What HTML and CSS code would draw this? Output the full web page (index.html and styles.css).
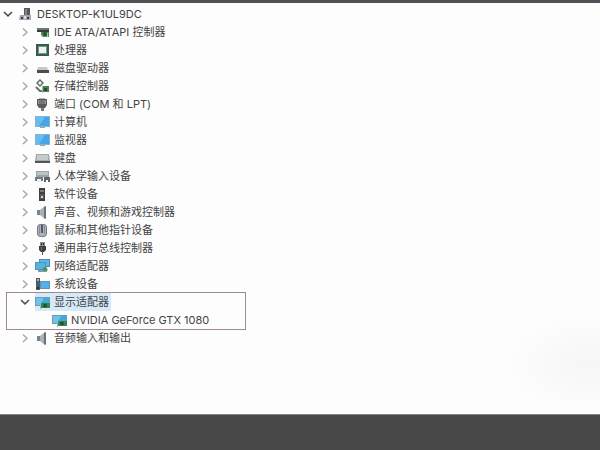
FILE: index.html
```
<!DOCTYPE html>
<html lang="zh-CN">
<head>
<meta charset="UTF-8" />
<title>设备管理器</title>
<link rel="stylesheet" href="styles.css">
</head>
<body>

<!-- shared glyphs -->
<svg class="defs" width="0" height="0" aria-hidden="true">
  <symbol id="right" viewBox="0 0 14 14"><path d="M5 3.5l4 3.7-4 3.7" fill="none" stroke="#a3a3a3" stroke-width="1.3"/></symbol>
  <symbol id="down" viewBox="0 0 14 14"><path d="M3 5l4 3.8L11 5" fill="none" stroke="#505050" stroke-width="1.6"/></symbol>
  <symbol id="monitor" viewBox="0 0 16 16">
    <path d="M0 2h15v11H0z" fill="#86b4cf"/><path d="M1 3h13v9H1z" fill="#44a6e4"/><path d="M1 3h9l-6 9H1z" fill="#69bcef"/>
    <path d="M5 13h5v1H5z" fill="#8fa9b8"/>
  </symbol>
  <symbol id="adapter" viewBox="0 0 16 16">
    <path d="M0 3h15v9H0z" fill="#6c9db8"/><path d="M1 4h13v7H1z" fill="#3faadd"/><path d="M1 4h8l-4 7H1z" fill="#6ec3ea"/>
    <path d="M6 9h9v5H6z" fill="#3c8454"/><path d="M5 9h1v6H5z" fill="#a0b8ac"/><circle cx="10" cy="11.5" r="2" fill="#1f5537"/>
  </symbol>
  <symbol id="speaker" viewBox="0 0 16 16">
    <path d="M2 6h3v5H2z" fill="#78848c"/><path d="M5 6l5-4v13l-5-4z" fill="#a9b2b8"/><path d="M9 3l2-1v13l-2-1z" fill="#687278"/>
  </symbol>
</svg>

<div class="window">
  <main class="panel">
    <ul class="tree">
      <li>
        <div class="row">
          <button class="toggle" aria-label="折叠"><svg><use href="#down"/></svg></button>
          <svg class="icon" viewBox="0 0 16 16"><path d="M6 2h6v8H6z" fill="#59545d"/><path d="M7 3h2v6H7z" fill="#85818b"/><path d="M2 9h11v5H1z" fill="#a2a6b1"/><path d="M3 11h2v2H3zM9 11h2v2H9z" fill="#353c44"/><path d="M6 10h2v3H6z" fill="#d9dce3"/></svg>
          <span class="label">DESKTOP-K1UL9DC</span>
        </div>
        <ul class="branch">
          <li class="row">
            <button class="toggle" aria-label="展开"><svg><use href="#right"/></svg></button>
            <svg class="icon" viewBox="0 0 16 16"><path d="M2 4h12v4H2z" fill="#6c7773"/><path d="M2 6h12v2H2z" fill="#343f39"/><path d="M6 8h8v5H8L6 11z" fill="#4e8d5d"/><circle cx="10" cy="10" r="2" fill="#24512e"/><path d="M12 9h1v4h-1z" fill="#a8c7a6"/></svg>
            <span class="label">IDE ATA/ATAPI 控制器</span>
          </li>
          <li class="row">
            <button class="toggle" aria-label="展开"><svg><use href="#right"/></svg></button>
            <svg class="icon" viewBox="0 0 16 16"><path d="M1 2h13v12H1z" fill="#365d4c"/><path d="M3 4h9v8H3z" fill="#719784"/><path d="M4 5h7v6H4z" fill="#eef2ef"/></svg>
            <span class="label">处理器</span>
          </li>
          <li class="row">
            <button class="toggle" aria-label="展开"><svg><use href="#right"/></svg></button>
            <svg class="icon" viewBox="0 0 16 16"><path d="M3 7h9l1 3H2z" fill="#c8c8c8"/><path d="M2 10h12v3H2z" fill="#4d4d4d"/></svg>
            <span class="label">磁盘驱动器</span>
          </li>
          <li class="row">
            <button class="toggle" aria-label="展开"><svg><use href="#right"/></svg></button>
            <svg class="icon" viewBox="0 0 16 16"><path d="M5 2l3 3-3 3-3-3z" fill="#f4f4f4" stroke="#5c6c69" stroke-width="1.4"/><path d="M1 9l4 4h2" fill="none" stroke="#69736e" stroke-width="2"/><path d="M7 8h7v6H7z" fill="#4a8159"/><path d="M9 10h3v3H9z" fill="#234c31"/><path d="M7 8h1v7H7z" fill="#a7b7ad"/></svg>
            <span class="label">存储控制器</span>
          </li>
          <li class="row">
            <button class="toggle" aria-label="展开"><svg><use href="#right"/></svg></button>
            <svg class="icon" viewBox="0 0 16 16"><path d="M2 3h10v6l-2 3H4L2 9z" fill="#5c5c5c"/><path d="M3 4h8v4H3z" fill="#969696"/><path d="M5 2v6M7 2v6M9 2v6" stroke="#4a4a4a" stroke-width=".8"/><path d="M6 12h3v3H6z" fill="#777"/></svg>
            <span class="label">端口 (COM 和 LPT)</span>
          </li>
          <li class="row">
            <button class="toggle" aria-label="展开"><svg><use href="#right"/></svg></button>
            <svg class="icon"><use href="#monitor"/></svg>
            <span class="label">计算机</span>
          </li>
          <li class="row">
            <button class="toggle" aria-label="展开"><svg><use href="#right"/></svg></button>
            <svg class="icon"><use href="#monitor"/></svg>
            <span class="label">监视器</span>
          </li>
          <li class="row">
            <button class="toggle" aria-label="展开"><svg><use href="#right"/></svg></button>
            <svg class="icon" viewBox="0 0 16 16"><path d="M1 4h13l1 7H0z" fill="#a5aaad"/><path d="M2 5h11v5H2z" fill="#c5cacd"/><path d="M0 11h15v2H0z" fill="#50565a"/></svg>
            <span class="label">键盘</span>
          </li>
          <li class="row">
            <button class="toggle" aria-label="展开"><svg><use href="#right"/></svg></button>
            <svg class="icon" viewBox="0 0 16 16"><path d="M1 3h13v6H1z" fill="#99a4aa"/><path d="M2 4h11v3H2z" fill="#bdc5c9"/><path d="M0 9h8v4H0z" fill="#707b81"/><path d="M2 11h4v3H2z" fill="#eee"/><path d="M9 9h6v5h-2v-2h-2v2H9z" fill="#59656b"/></svg>
            <span class="label">人体学输入设备</span>
          </li>
          <li class="row">
            <button class="toggle" aria-label="展开"><svg><use href="#right"/></svg></button>
            <svg class="icon" viewBox="0 0 16 16"><path d="M4 2h6v13H4z" fill="#3f403b"/><path d="M5 4h4v2H5z" fill="#7c7d74"/><path d="M5 8h4v5H5z" fill="#5b5c54"/><path d="M6 10h2v2H6z" fill="#d3d3ca"/></svg>
            <span class="label">软件设备</span>
          </li>
          <li class="row">
            <button class="toggle" aria-label="展开"><svg><use href="#right"/></svg></button>
            <svg class="icon"><use href="#speaker"/></svg>
            <span class="label">声音、视频和游戏控制器</span>
          </li>
          <li class="row">
            <button class="toggle" aria-label="展开"><svg><use href="#right"/></svg></button>
            <svg class="icon" viewBox="0 0 16 16"><rect x="2" y="2" width="10" height="13" rx="4" fill="#747b83"/><rect x="3" y="3" width="8" height="11" rx="3" fill="#adb4bb"/><path d="M7 3v8" stroke="#39434c" stroke-width="1.6"/><path d="M4.5 4v8M9.5 4v8" stroke="#7a828a" stroke-width=".8"/></svg>
            <span class="label">鼠标和其他指针设备</span>
          </li>
          <li class="row">
            <button class="toggle" aria-label="展开"><svg><use href="#right"/></svg></button>
            <svg class="icon" viewBox="0 0 16 16"><path d="M5 2h5v4H5z" fill="#8b8b8b"/><path d="M6 3h1v2H6zM8 3h1v2H8z" fill="#333"/><path d="M4 6h7v4l-2 2H6l-2-2z" fill="#3f3f3f"/><path d="M6 7h1v3H6z" fill="#777"/><path d="M7 12h1v3H7z" fill="#555"/></svg>
            <span class="label">通用串行总线控制器</span>
          </li>
          <li class="row">
            <button class="toggle" aria-label="展开"><svg><use href="#right"/></svg></button>
            <svg class="icon" viewBox="0 0 16 16"><path d="M4 1h11v8H4z" fill="#5188aa"/><path d="M5 2h9v6H5z" fill="#5cb8e6"/><path d="M0 4h11v8H0z" fill="#5b8eac"/><path d="M1 5h9v6H1z" fill="#53b4e8"/><path d="M3 12h5v2H3z" fill="#7e9dac"/><circle cx="10" cy="11.5" r="2.5" fill="#4b9572"/></svg>
            <span class="label">网络适配器</span>
          </li>
          <li class="row">
            <button class="toggle" aria-label="展开"><svg><use href="#right"/></svg></button>
            <svg class="icon" viewBox="0 0 16 16"><path d="M1 2h4v12H1z" fill="#4c5c69"/><path d="M2 3h2v2H2z" fill="#9eb0bd"/><path d="M5 5h10v8H5z" fill="#5e94b6"/><path d="M6 6h8v6H6z" fill="#52b1e8"/><path d="M2 11h2v2H2z" fill="#25303a"/></svg>
            <span class="label">系统设备</span>
          </li>
          <li class="marked">
            <div class="row">
              <button class="toggle" aria-label="折叠"><svg><use href="#down"/></svg></button>
              <span class="selected">
                <svg class="icon"><use href="#adapter"/></svg>
                <span class="label">显示适配器</span>
              </span>
            </div>
            <ul class="branch">
              <li class="row leaf">
                <svg class="icon"><use href="#adapter"/></svg>
                <span class="label">NVIDIA GeForce GTX 1080</span>
              </li>
            </ul>
          </li>
          <li class="row">
            <button class="toggle" aria-label="展开"><svg><use href="#right"/></svg></button>
            <svg class="icon"><use href="#speaker"/></svg>
            <span class="label">音频输入和输出</span>
          </li>
        </ul>
      </li>
    </ul>
  </main>
  <footer class="footer"></footer>
</div>

</body>
</html>
```
FILE: styles.css
```
body{margin:0;background:#484848;font-family:Inter,"Noto Sans CJK SC",sans-serif;font-size:11px;color:#444}
ul{list-style:none;margin:0;padding:0}
.defs{position:absolute}
.window{display:flex;flex-direction:column;min-height:100vh}
.panel{flex:1;border-top:3px solid #505258;border-bottom:1px solid #858585;padding:2px 0 0 1px;
       background:radial-gradient(ellipse 80px 50px at 85% 60%,#f6f6f6,#fdfdfd) no-repeat right bottom 14px/88px 90px #fdfdfd}
.footer{height:35px;background:#484848}
.row{display:flex;align-items:center;gap:3px;height:18px;line-height:18px;white-space:nowrap}
.branch{padding-left:17px}
.toggle{width:14px;height:14px;padding:0;border:0;background:none;cursor:pointer}
.toggle svg{display:block;width:14px;height:14px}
.icon{flex:none;width:16px;height:16px}
.leaf{padding-left:17px}
.selected{display:flex;align-items:center;gap:3px;padding-right:2px;background:#d5e9f8}
/* framed group keeps the same indent as its siblings */
.marked{box-sizing:border-box;width:fit-content;min-width:240px;margin:-1px 0 -1px -12px;padding:0 11px;border:1px solid #a08c8f}
```
